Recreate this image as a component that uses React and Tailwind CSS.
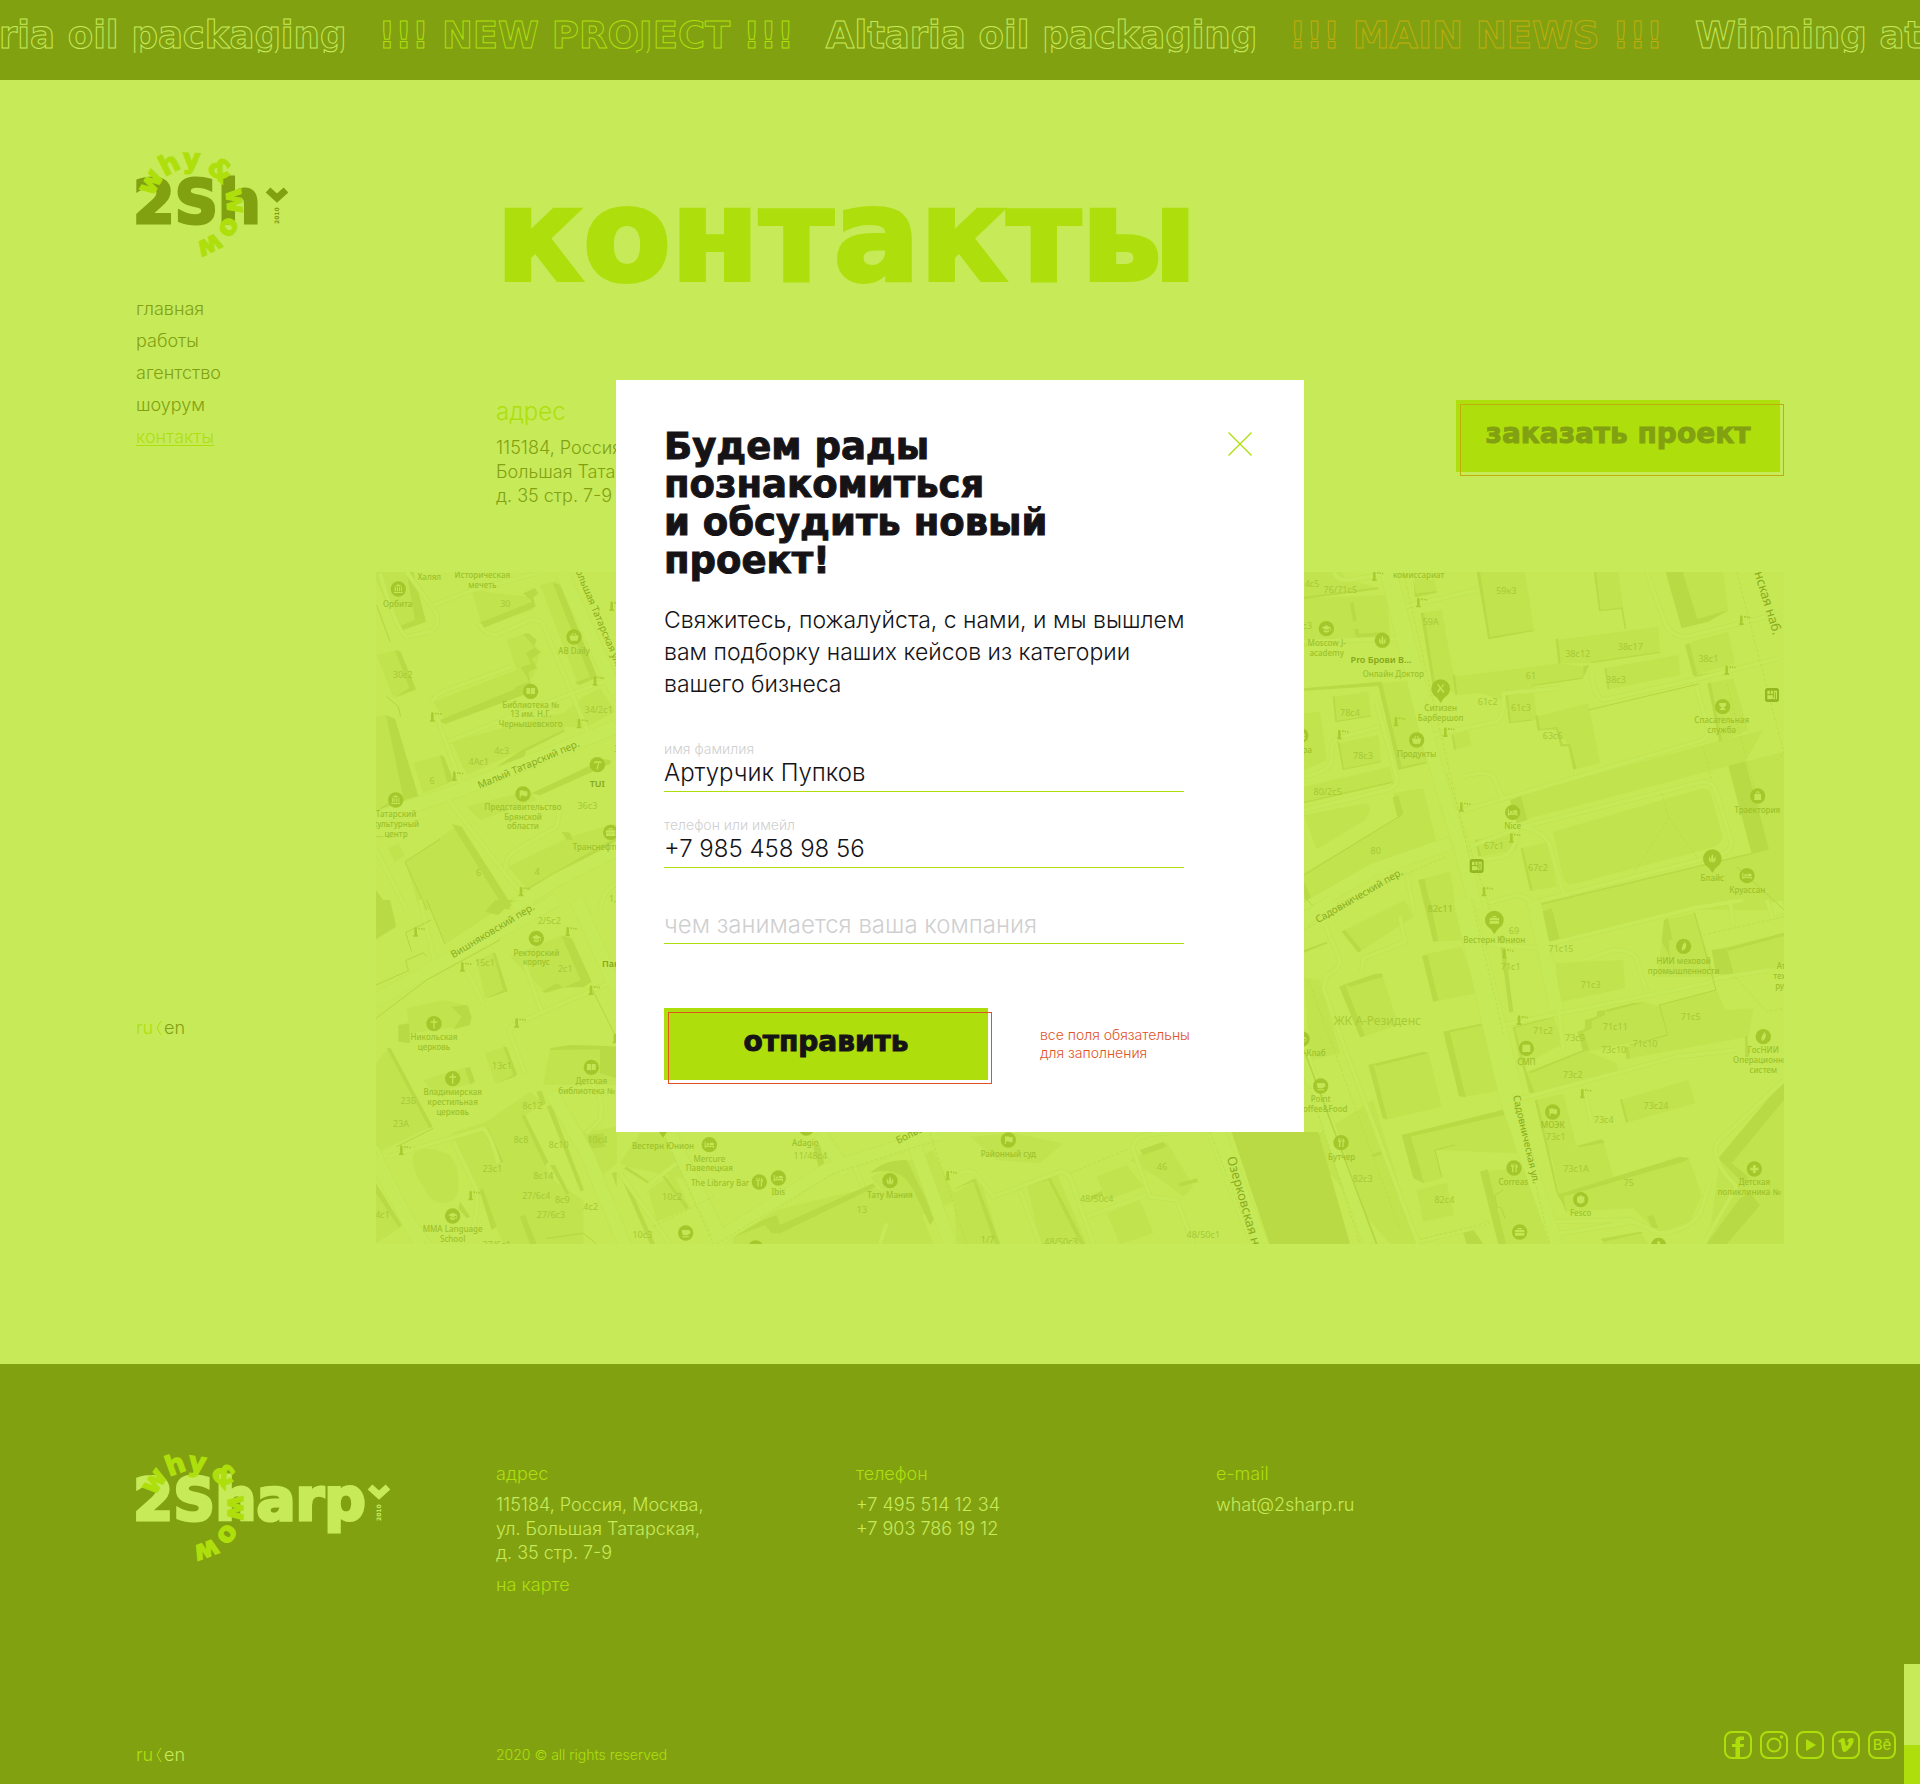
import React from "react";

const NAV = ["главная", "работы", "агентство", "шоурум", "контакты"];

const TICKER = [
  { text: "Altaria oil packaging", tone: "light" },
  { text: "!!! NEW PROJECT !!!", tone: "lime" },
  { text: "Altaria oil packaging", tone: "light" },
  { text: "!!! MAIN NEWS !!!", tone: "orange" },
  { text: "Winning at", tone: "light" },
];

const TICKER_TONE = {
  light: "[-webkit-text-stroke:1px_#c7ea59]",
  lime: "[-webkit-text-stroke:1px_#aedf0d]",
  orange: "[-webkit-text-stroke:1px_#bfae0c]",
};

function Ticker() {
  return (
    <div className="h-20 overflow-hidden bg-[#82a111] pt-[17px]">
      <div className="-ml-[85px] flex h-9 gap-8 overflow-hidden whitespace-nowrap font-['DejaVu_Sans',sans-serif] text-[37px] leading-[38px] font-bold text-transparent">
        {TICKER.map((item, i) => (
          <span key={i} className={TICKER_TONE[item.tone]}>
            {item.text}
          </span>
        ))}
      </div>
    </div>
  );
}

function OrbitWords({ cx, cy, letters }) {
  return (
    <g fill="#aedf0d" fontSize="27" fontWeight="700" textAnchor="middle" stroke="#aedf0d" strokeWidth="1.4">
      {letters.map(([ch, angle], i) => (
        <text key={i} x={cx} y={cy - 37} transform={`rotate(${angle} ${cx} ${cy})`}>
          {ch}
        </text>
      ))}
    </g>
  );
}

function LogoShort() {
  return (
    <svg width="156" height="108" viewBox="0 0 156 108" className="block overflow-visible font-['DejaVu_Sans',sans-serif]" aria-label="2Sharp">
      <text x="-3" y="71" fontSize="60" fontWeight="700" fill="#82a111" stroke="#82a111" strokeWidth="3">
        2Sh
      </text>
      <path d="M132 38 L141 46 L150 38" fill="none" stroke="#82a111" strokeWidth="7" />
      <text transform="translate(143 72) rotate(-90)" fontSize="6" fontWeight="700" fill="#82a111">
        2010
      </text>
      <OrbitWords
        cx={54}
        cy={53}
        letters={[["w", -60], ["h", -27], ["y", 2], ["&", 41], ["w", 85], ["o", 120], ["w", 154]]}
      />
    </svg>
  );
}

function LogoFull() {
  return (
    <svg width="258" height="108" viewBox="0 0 258 108" className="block overflow-visible font-['DejaVu_Sans',sans-serif]" aria-label="2Sharp">
      <text x="-3" y="66" fontSize="58" fontWeight="700" fill="#c7ea59" stroke="#c7ea59" strokeWidth="3">
        2Sharp
      </text>
      <path d="M234 33 L243 41 L252 33" fill="none" stroke="#c7ea59" strokeWidth="7" />
      <text transform="translate(245 67) rotate(-90)" fontSize="6" fontWeight="700" fill="#c7ea59">
        2010
      </text>
      <OrbitWords
        cx={55}
        cy={54}
        letters={[["w", -54], ["h", -20], ["y", 8], ["&", 46], ["w", 90], ["o", 126], ["w", 160]]}
      />
    </svg>
  );
}

function LangSwitch({ active }) {
  return (
    <div className="flex items-center text-lg leading-6 font-light">
      <a href="#ru" className="text-[#aedf0d]">
        ru
      </a>
      <svg width="9" height="16" viewBox="0 0 9 16" fill="none" stroke="#aedf0d" className="mx-px">
        <path d="M7 1 L3 8 L7 15" />
      </svg>
      <a href="#en" className={active}>
        en
      </a>
    </div>
  );
}

/* ---------- map ---------- */

/* Each sheet is drawn at three units per map pixel, from its own corner. */
const SHEETS = [
  {
    x: 370,
    y: 560,
    blocks: [
      "18,36 120,36 165,185 85,210 18,60",
      "305,90 470,110 490,150 335,198",
      "510,75 560,62 680,355 625,375",
      "20,285 85,270 135,390 70,412",
      "190,425 440,330 410,240 470,220 510,275 490,350 430,400 225,485",
      "130,610 215,585 245,665 160,700",
      "245,545 520,470 580,460 585,510 290,645",
      "105,905 200,840 265,795 425,1049 150,1049",
      "290,740 480,690 500,720 330,780",
      "415,920 600,830 740,790 740,830 470,985",
      "530,500 640,410 690,385 735,455 650,500",
      "18,470 50,465 140,710 18,750",
      "55,865 85,850 105,885 75,905",
    ],
    shades: [
      "110,36 130,36 168,185 90,213 78,203 135,180",
      "325,190 455,138 485,125 460,100 495,84 505,100 490,112 497,140 345,202",
      "548,68 572,75 682,352 628,376 615,368 660,350",
      "75,270 92,275 138,388 75,413 118,383",
      "460,222 475,220 500,240 490,262 513,275 485,298 502,325 475,335 485,385 470,350 452,322 483,312 468,280 495,262",
      "205,482 430,390 440,380 478,365 480,398 225,492",
      "48,466 75,476 145,708 120,715 18,752 60,725 100,712",
      "245,792 275,800 425,1035 415,1049 400,1040",
      "485,700 700,598 722,600 720,612 510,706",
      "470,985 740,830 740,842 490,993",
      "210,585 222,590 250,660 165,702 232,668",
      "575,815 600,818 608,840 590,838",
      "18,990 60,1049 18,1049",
      "18,135 22,135 62,245 58,245",
      "455,570 580,510 585,514 468,574 462,590 380,620",
    ],
    roads: [
      "M110,36 L200,160 Q210,200 180,215 L110,230 Q80,215 30,40",
      "M190,135 L310,90 L500,40",
      "M325,190 Q345,225 380,225 L480,180 Q510,175 520,195 L655,520",
      "M185,430 Q190,410 220,395 L425,320",
      "M200,470 L280,690",
      "M235,545 L500,440 L740,350",
      "M235,720 L420,960 L500,1049",
      "M410,930 Q400,900 430,875 L560,800 L570,740",
      "M690,1049 Q700,990 740,970",
      "M18,870 L110,1049",
    ],
    avenues: ["M18,775 L270,690 L740,500", "M575,36 L740,400", "M430,1040 L560,960 L740,870"],
    thin: ["M105,905 L210,838", "M105,905 L170,1049", "M50,410 L85,440 L92,470", "M18,830 L40,830"],
    numbers: [
      ["30", 406, 132], ["30с2", 98, 346], ["34/2с1", 686, 449], ["4с3", 395, 572], ["4Ас1", 326, 607],
      ["6", 186, 664], ["36с3", 652, 739], ["6", 326, 939], ["4", 501, 936], ["1,", 728, 1018], ["3", 740, 568],
    ],
    labels: [
      ["Халял", 178, 50], ["Историческая", 337, 46], ["мечеть", 337, 75], ["Орбита", 83, 131], ["AB Daily", 612, 273],
      ["Библиотека №", 482, 434], ["13 им. Н.Г.", 482, 463], ["Чернышевского", 482, 493], ["Татарский", 78, 762],
      ["культурный", 78, 792], ["центр", 78, 821], ["Представительство", 459, 740], ["Брянской", 459, 770],
      ["области", 459, 799], ["Транснефть", 678, 860],
    ],
    bold: [["TUI", 682, 673]],
    streets: [["Малый Татарский пер.", 476, 614, -23], ["Большая Татарская ул.", 682, 165, 67]],
    pins: [[85, 87, "museum"], [612, 231, "cart"], [482, 394, "book"], [682, 614, "palm"], [77, 720, "museum"], [459, 702, "flag"], [722, 817, "case"]],
    posts: [[187, 470], [675, 362], [627, 490], [253, 648], [453, 994], [725, 138]],
  },
  {
    x: 370,
    y: 900,
    blocks: [
      "18,0 60,0 78,80 18,100",
      "170,0 450,0 390,25 225,132",
      "110,325 225,300 300,320 300,375 120,400",
      "320,180 370,158 410,275 345,295",
      "420,170 580,105 655,250 525,275",
      "160,540 290,500 310,550 190,580",
      "345,460 405,440 440,530 375,550",
      "540,445 740,440 740,555 520,555",
      "18,490 55,445 185,680 18,760",
      "130,760 Q170,730 240,765 L260,800 Q275,880 250,900 Q190,930 160,860 Q120,800 130,760",
      "245,700 350,665 480,575 520,610 460,650 520,790 560,850 640,900 640,1032 400,1032 330,870",
      "620,700 740,680 740,790 680,840",
      "18,870 95,980 18,1030",
    ],
    shades: [
      "18,0 60,0 78,80 18,118",
      "375,0 430,0 385,45 345,35",
      "85,375 118,370 120,430 85,425",
      "245,320 290,315 305,350 300,375 250,388 275,350",
      "368,158 376,158 413,274 345,296 400,270",
      "575,108 605,115 665,245 640,262 582,262 632,240",
      "515,275 560,250 580,262 530,278",
      "50,445 62,445 188,680 178,685",
      "285,505 300,502 315,545 300,553",
      "400,440 410,440 442,525 378,552 430,525",
      "690,440 740,440 740,535 690,520",
      "540,445 600,435 690,437 740,440 740,448 540,450",
      "455,648 465,645 535,785 525,797",
      "500,575 515,572 528,610 515,618",
      "530,618 545,615 642,870 632,875",
      "340,690 355,685 400,785 385,792",
      "328,870 338,865 380,980 365,990",
      "540,795 555,795 598,880 590,885",
      "655,705 700,700 705,740 650,748",
      "270,905 300,950 290,955 265,925",
      "450,950 465,945 500,1032 480,1032",
      "18,850 95,975 88,983 18,880",
      "725,820 740,815 740,860",
    ],
    roads: [
      "M150,0 L195,190",
      "M290,210 L340,310",
      "M460,180 L515,335",
      "M465,520 L420,400 Q415,380 440,370 L740,240",
      "M55,770 L240,715 L340,685 Q360,700 385,790",
      "M250,725 L320,870 Q325,960 300,1000",
      "M660,540 Q705,600 690,660 L650,700",
      "M120,950 L180,1032",
      "M540,590 L640,760 L740,980",
      "M18,740 L160,1032",
    ],
    avenues: ["M18,300 L340,120 L560,0", "M620,0 L740,270", "M18,780 L150,1032", "M545,580 L650,760 L770,1049"],
    thin: ["M170,0 L225,132", "M18,255 L115,212 L107,182 L160,158 L170,170", "M390,120 L170,240 L18,355", "M668,270 L735,405", "M107,98 L183,60", "M107,98 L125,155", "M530,1015 L640,1000 L680,1032", "M80,740 L190,685"],
    numbers: [
      ["2/5с2", 538, 62], ["15с1", 345, 190], ["2с1", 586, 208], ["13с1", 396, 499], ["8с12", 487, 619], ["23Б", 115, 604],
      ["23А", 93, 673], ["8с8", 453, 720], ["8с10", 566, 736], ["10с4", 682, 720], ["23с1", 367, 808], ["8с14", 520, 827],
      ["27/6с4", 499, 887], ["8с9", 577, 899], ["4с2", 662, 922], ["27/6с3", 543, 945], ["14с1", 30, 945], ["27/6с1", 380, 1034],
    ],
    labels: [
      ["Ректорский", 499, 158], ["корпус", 499, 187], ["Никольская", 192, 412], ["церковь", 192, 441], ["Владимирская", 248, 577],
      ["крестильная", 248, 606], ["церковь", 248, 635], ["Детская", 664, 543], ["библиотека №", 650, 572], ["MMA Language", 248, 987], ["School", 248, 1016],
    ],
    bold: [["Панорама", 766, 192]],
    streets: [["Вишняковский пер.", 368, 93, -31]],
    pins: [[499, 115, "cap"], [192, 371, "cross"], [248, 536, "cross"], [664, 502, "book"], [248, 948, "cap"]],
    posts: [[137, 95], [277, 200], [593, 94], [663, 270], [440, 368], [94, 750], [302, 886], [735, 415]],
  },
  {
    x: 1290,
    y: 560,
    blocks: [
      "565,36 705,36 732,212 598,236",
      "42,36 155,36 165,55 265,85 42,110",
      "372,55 435,60 440,95 378,110",
      "915,36 985,36 1000,145 930,152",
      "1130,36 1300,36 1315,155 1175,205",
      "800,240 1105,200 1110,275 905,310 810,310",
      "945,325 1165,285 1170,345 955,388",
      "1190,250 1315,215 1335,310 1215,345",
      "490,350 805,310 880,320 880,352 725,375 650,390 560,400 500,405",
      "560,395 650,390 730,375 740,480 660,487 650,425",
      "740,470 895,430 930,610 855,628 835,555 800,510 745,510",
      "395,160 455,150 500,400 430,380",
      "130,410 235,395 243,470 140,485",
      "145,550 265,525 273,605 160,630",
      "42,460 90,455 110,600 42,630",
      "490,525 535,510 543,555 495,570",
      "42,680 300,620 310,665 42,725",
      "42,115 290,105 300,230 200,240 42,260",
      "270,370 390,360 410,610 330,625",
      "700,780 1365,605 1420,510 1260,550 690,705",
      "790,815 1240,685 Q1260,690 1265,710 L1298,830 Q1295,855 1260,865 L840,975 Q825,970 815,940 Z",
      "695,865 775,845 800,980 722,992",
      "558,840 690,805 680,870 570,890",
      "400,685 440,850 42,1049 42,940 335,765 310,700",
      "385,960 480,935 500,1049 405,1049",
      "1365,605 1482,575 1482,850 1435,868",
      "740,1035 1385,880 1482,850 1482,1049 740,1049",
      "42,765 230,730 Q250,745 225,780 L80,868",
      "1255,370 1330,355 1375,510 1290,545",
    ],
    shades: [
      "560,36 570,36 600,230 732,210 732,213 595,238",
      "42,110 265,82 265,88 42,117",
      "180,130 190,125 200,180 190,185",
      "192,208 205,206 208,222 285,215 285,224 200,238",
      "370,55 378,100 440,94 440,98 375,112",
      "912,36 918,36 932,150 998,142 1009,207 1004,207 994,147 927,154",
      "1127,36 1178,36 1222,178 1315,150 1255,185 1175,205",
      "797,238 804,236 812,310 805,312",
      "905,305 1110,275 1110,279 905,309",
      "944,325 949,323 958,386 953,390",
      "1185,255 1198,250 1222,343 1210,348",
      "1215,345 1335,330 1335,334 1215,350",
      "488,345 495,343 502,403 496,406",
      "645,390 652,388 662,485 725,478 725,482 657,489",
      "725,375 880,352 898,315 880,318 880,356 725,379",
      "736,468 743,465 750,507 803,500 818,552 840,552 860,625 850,630 835,558 812,560 797,506 743,512",
      "392,160 402,158 435,372 428,380",
      "128,410 133,408 141,482 243,466 243,469 136,487",
      "143,548 148,546 162,626 273,604 273,607 158,630",
      "42,385 275,365 335,620 410,605 410,610 325,630 265,378 42,392",
      "1252,370 1262,368 1296,540 1288,545",
      "660,720 693,708 712,780 680,790",
      "308,712 325,706 340,762 322,770",
      "692,865 698,863 728,990 720,992",
      "555,840 561,838 573,888 566,890",
      "1315,618 1366,603 1437,868 1385,882",
      "740,1033 1385,878 1385,883 740,1038",
      "42,965 80,1049 58,1049 42,1000",
      "385,960 403,956 425,1049 407,1049",
      "42,725 308,664 308,669 42,730",
      "485,525 490,523 498,568 492,570",
    ],
    roads: [
      "M130,36 Q145,65 180,60 L290,40",
      "M345,140 L560,90",
      "M1070,36 L1125,190 Q1145,230 1190,230 L1470,160",
      "M905,330 Q905,400 940,420 L1210,360 L1465,295",
      "M490,760 L1240,540 Q1260,530 1250,490 L1215,365",
      "M540,860 L700,800 L1240,665 Q1270,665 1280,700 L1325,850 Q1320,875 1290,885 L740,1025",
      "M430,525 L620,485 Q645,470 640,400 L805,385",
      "M515,650 Q590,630 610,650 L640,720",
      "M700,800 Q770,820 780,860 L820,1000",
      "M42,650 Q120,635 125,600 Q120,545 145,535 L270,500",
      "M42,750 L290,690 Q325,680 320,650 L260,430",
      "M580,900 L640,890 Q680,870 680,810",
      "M42,245 L340,235",
      "M590,1030 L680,1005 Q740,1020 740,1049",
      "M350,940 L370,1049",
    ],
    avenues: ["M290,36 L420,560 L510,860 L560,1049", "M300,36 L400,420", "M42,1049 L250,930 L480,850", "M1440,1049 L1482,1040"],
    thin: ["M895,450 L1225,372", "M42,945 L335,765", "M42,1010 L80,1049", "M1340,920 L1482,1049"],
    dashes: ["M1340,36 L1482,580 L1445,615", "M1115,700 L1137,775 L1025,950", "M1137,775 L1220,890", "M470,640 L600,1049", "M1310,370 L1410,750", "M340,36 L540,900", "M100,1049 L470,890", "M1240,560 L1265,660"],
    numbers: [
      ["4с5", 66, 71], ["76/71с5", 151, 89], ["59к3", 649, 94], ["59А", 422, 187], ["с3", 52, 199], ["38с12", 863, 283],
      ["38с17", 1021, 262], ["38с1", 1255, 297], ["38с3", 978, 359], ["61", 723, 348], ["61с2", 593, 427], ["61с3", 693, 445],
      ["78с4", 180, 458], ["63с6", 788, 527], ["78с3", 219, 588], ["80/2с5", 113, 696], ["80", 257, 874], ["67с1", 612, 858],
      ["67с2", 744, 925], ["82с11", 451, 1047],
    ],
    labels: [
      ["комиссариат", 386, 45], ["Moscow J-", 110, 249], ["academy", 110, 278], ["Онлайн Доктор", 310, 343], ["Ситизен", 452, 444],
      ["Барбершоп", 452, 474], ["Продукты", 380, 582], ["Спасательная", 1295, 481], ["служба", 1295, 510], ["Nice", 668, 797],
      ["Траектория", 1402, 750], ["Блайс", 1267, 954], ["Круассан", 1372, 990], ["ра", 52, 570],
    ],
    bold: [["Pro Брови B...", 273, 301]],
    streets: [["Садовнический пер.", 208, 1008, -30]],
    quays: [["нская наб.", 1430, 130, 73]],
    pins: [[109, 206, "cap"], [277, 241, "lotus"], [452, 386, "scissors"], [380, 540, "cart"], [1298, 440, "aid"], [668, 757, "bed"], [1403, 708, "bag"], [1267, 896, "lotus"], [1371, 947, "bed"], [32, 527, "case"]],
    drops: [[452, 386], [1267, 896]],
    buses: [[1446, 405], [560, 918]],
    posts: [[253, 48], [385, 127], [1354, 180], [1310, 330], [318, 484], [148, 523], [466, 516], [514, 740], [664, 833], [582, 994]],
  },
  {
    x: 1290,
    y: 900,
    blocks: [
      "155,95 345,0 370,50 210,155",
      "400,0 485,0 520,120 430,125",
      "398,165 515,140 560,280 430,305",
      "148,260 275,220 325,375 215,412",
      "235,495 415,455 455,620 285,660",
      "462,395 585,372 630,572 515,592",
      "755,30 1200,0 1200,35 805,125",
      "1125,60 1215,40 1275,230 1100,230",
      "790,190 1000,180 1005,265 815,305",
      "670,380 790,350 820,430 690,500",
      "880,385 930,340 1060,305 1110,320 1130,405 890,455",
      "1105,315 1280,270 1305,330 1390,325 1375,410 1020,475 1010,440 1135,400",
      "710,515 880,450 980,490 990,520 735,580",
      "990,600 1195,540 1215,610 1010,668",
      "735,600 820,582 860,740 780,770",
      "785,765 940,720 970,830 810,885",
      "820,885 1195,770 1235,885 1200,965 1105,1000 1030,925 830,935",
      "338,705 650,630 680,760 435,750 455,835 400,850",
      "380,870 470,848 492,945 400,965",
      "575,815 720,800 775,1032 640,1032",
      "1270,150 1482,100 1482,200 1330,225",
      "1290,770 1482,540 1482,1032 1255,1032",
      "935,1015 1050,995 1075,1032 940,1032",
      "42,235 90,240 150,460 60,480",
      "42,730 250,600 380,1032 300,1032",
    ],
    shades: [
      "155,95 165,90 215,150 205,158",
      "400,0 420,0 445,122 430,126",
      "396,168 412,164 445,300 430,305",
      "148,260 165,253 225,408 210,412",
      "165,253 255,222 275,220 280,230 180,260",
      "235,495 250,492 292,656 278,655",
      "250,492 400,455 415,460 260,498",
      "460,395 478,391 527,592 507,588",
      "478,391 570,372 582,375 480,397",
      "752,35 785,25 810,120 775,125",
      "1122,60 1134,55 1147,118 1135,122 1140,170 1115,125",
      "1265,150 1310,145 1332,225 1278,222",
      "1310,145 1482,98 1482,108 1315,152",
      "628,110 640,105 670,335 658,338",
      "862,395 885,388 885,360 920,350 922,333 945,330 945,345 905,362 905,385 880,398 898,450 880,455",
      "945,330 1030,308 1060,308 950,336",
      "668,382 790,350 790,353 674,384 710,515 735,580 718,578",
      "718,515 880,450 880,455 722,520",
      "990,598 996,597 1014,666 1008,668",
      "1005,442 1015,440 1020,475 1010,478",
      "734,600 742,600 806,880 820,885 830,940 815,905 800,880",
      "860,738 935,718 945,728 865,742",
      "808,882 970,832 1170,770 1197,775 1180,785 820,890",
      "335,705 360,702 402,850 370,835",
      "335,705 645,628 670,638 600,655 360,710",
      "570,815 593,808 648,1032 625,1032",
      "245,765 280,750 284,760 250,772",
      "1285,775 1482,540 1482,600 1325,790 1375,830 1360,850",
      "1250,1032 1350,895 1380,880 1410,915 1310,1032",
      "1365,408 1372,408 1378,470 1366,472",
      "932,1018 1050,995 1060,998 940,1025",
      "1072,950 1090,945 1105,985 1085,985",
      "517,990 550,990 580,1032 530,1032",
      "42,150 110,125 112,130 42,158",
    ],
    roads: [
      "M105,75 L150,180 Q150,210 110,225 L100,265 L170,460 L385,1032",
      "M330,50 L345,125 L220,175 L215,215",
      "M745,140 L1210,25 L1360,0",
      "M640,375 L1250,250 L1280,235 L1440,210",
      "M560,130 L750,145",
      "M880,180 L970,150 Q1030,150 1040,180 L1070,275",
      "M790,190 L820,450",
      "M660,605 L1160,470 L1340,450",
      "M885,580 L905,670",
      "M780,965 L1020,960 L1110,1000 Q1200,990 1230,940 L1260,845",
      "M1482,540 L1280,730 Q1260,780 1340,860 L1240,1032",
      "M390,1025 L600,970",
      "M780,1005 L1030,965",
      "M1320,0 L1330,80 M1430,0 L1450,60",
    ],
    avenues: ["M510,0 L650,600 L800,1032", "M530,0 L680,580", "M42,60 L130,0", "M42,470 L240,1032", "M730,0 L800,330"],
    water: ["0,696 42,750 157,1032 0,1032"],
    thin: ["M1213,38 L1278,270", "M1108,315 L1278,270", "M1108,315 L1133,405 L1020,435", "M435,750 L495,735 M435,750 L455,832", "M615,885 L640,870 M615,885 L620,920 L635,925 L645,955"],
    bars: ["M42,450 L260,1032"],
    dashes: ["M545,0 L640,400", "M42,90 L200,0", "M1335,230 L1430,335 L1482,325", "M1240,105 L1482,50", "M700,700 L780,1032", "M60,560 L210,1032", "M55,240 L330,990", "M390,1018 L600,970"],
    numbers: [
      ["82с11", 451, 28], ["69", 672, 92], ["71с15", 813, 148], ["71с1", 662, 201], ["71с3", 902, 256], ["71с5", 1202, 351],
      ["71с2", 759, 394], ["71с11", 976, 380], ["73с9", 855, 413], ["71с10", 1065, 433], ["73с10", 971, 451], ["73с2", 848, 525],
      ["73с24", 1098, 617], ["73с4", 941, 660], ["73с1", 797, 710], ["73с1А", 858, 807], ["75", 1016, 850], ["82с3", 218, 837], ["82с4", 463, 899],
    ],
    labels: [
      ["Вестерн Юнион", 613, 120], ["НИИ меховой", 1181, 183], ["промышленности", 1181, 212], ["Ате", 1480, 197], ["техн", 1476, 227],
      ["руч", 1476, 257], ["-Клаб", 74, 459], ["ГосНИИ", 1420, 451], ["Операционных", 1420, 481], ["систем", 1420, 510],
      ["СМП", 709, 486], ["Point", 92, 597], ["Coffee&Food", 98, 627], ["МОЭК", 788, 676], ["Бутчер", 155, 771], ["Correas", 670, 845],
      ["Fesco", 872, 938], ["Детская", 1393, 846], ["поликлиника №", 1377, 875],
    ],
    big: [["ЖК А-Резиденс", 262, 365]],
    streets: [["Садовническая ул.", 708, 718, 77]],
    pins: [[613, 60, "case"], [1181, 139, "leaf"], [709, 445, "coin"], [1420, 410, "leaf"], [92, 558, "cup"], [788, 636, "flag"], [153, 728, "fork"], [672, 804, "fork"], [872, 899, "box"], [1393, 807, "plus"], [689, 996, "case"], [1106, 1036, "plus"], [36, 417, "cap"]],
    drops: [[613, 60]],
    posts: [[643, 160], [687, 360], [877, 580]],
  },
  {
    x: 620,
    y: 1110,
    blocks: [
      "0,160 60,70 130,70 210,210 20,170",
      "85,240 160,190 210,295 110,335",
      "340,330 760,230 900,300 940,402 340,402",
      "750,200 870,150 940,120 1010,270 870,330",
      "1000,250 1080,205 1140,402 1010,402",
      "1220,220 1310,190 1400,402 1260,402",
      "1430,200 1520,165 1570,230 1460,270",
      "1460,310 1560,270 1600,370 1500,402",
      "1530,150 1640,95 1720,230 1690,260 1610,200",
      "1050,80 1180,70 1330,100 1260,160 1130,150",
    ],
    shades: [
      "10,175 20,170 88,215 82,220",
      "120,190 128,190 205,290 198,298",
      "0,195 10,190 105,402 90,402",
      "330,385 430,330 470,315 480,345 760,220 768,230 480,370 455,370 435,345",
      "750,190 Q790,150 860,150 L945,325 L930,345 L890,260 Q850,160 750,190",
      "998,240 1065,205 1140,402 1125,402 1060,215",
      "1210,230 1290,202 1395,402 1380,402 1285,210",
      "1560,120 1630,95 1640,110 1570,135",
      "1410,260 1445,242 1450,255 1415,270",
      "1675,220 1730,205 1735,215 1680,230",
      "580,110 600,105 615,170 598,178",
    ],
    roads: [
      "M0,190 L150,402",
      "M90,220 L170,160",
      "M1020,190 Q1060,170 1080,210 L1120,260 L1320,185 Q1350,185 1360,230 L1420,402",
      "M1200,240 L1260,402",
      "M1640,70 Q1530,70 1540,120 L1590,260 L1670,270 L1720,402",
      "M1400,320 L1580,255",
      "M700,160 L730,230",
      "M780,402 L800,340",
    ],
    avenues: ["M270,402 L620,180 L960,70", "M150,70 L310,402", "M870,70 L990,402", "M600,70 L680,190", "M1780,66 L1910,402", "M1795,66 L1925,402"],
    water: ["1835,66 2095,66 2190,402 1948,402"],
    dashes: ["M1350,190 L1530,115", "M290,402 L640,190 L950,90", "M130,70 L280,402", "M1770,66 L1900,402", "M100,350 L280,260", "M930,70 L1040,402"],
    numbers: [
      ["10с2", 156, 261], ["10с3", 67, 376], ["11/48с4", 571, 137], ["13", 726, 299], ["46", 1626, 170], ["48/50с4", 1430, 266],
      ["1/7", 1103, 390], ["48/50с3", 1323, 396], ["48/50с1", 1750, 376],
    ],
    labels: [
      ["Вестерн Юнион", 129, 108], ["Mercure", 268, 146], ["Павелецкая", 268, 175], ["The Library Bar", 300, 219], ["Ibis", 475, 246],
      ["Adagio", 556, 99], ["Тату Мания", 810, 254], ["Районный суд", 1165, 132],
    ],
    streets: [["Большой Татарский", 960, 30, -26]],
    quays: [["Озерковская наб.", 1875, 300, 74]],
    pins: [[129, 40, "case"], [268, 104, "bed"], [418, 216, "fork"], [475, 204, "bed"], [559, 54, "bed"], [810, 212, "lotus"], [1165, 90, "flag"], [197, 369, "cup"], [407, 414, "cup"]],
    drops: [[129, 40]],
    posts: [[983, 196]],
  },
];

/* Pictograms sit in a 30 × 30 box around the pin's centre. */
const PICTOS = {
  museum: "M-12,-8 L0,-14 L12,-8 Z M-11,-5 h4 v12 h-4 Z M-4,-5 h3 v12 h-3 Z M2,-5 h3 v12 h-3 Z M8,-5 h3 v12 h-3 Z M-13,9 h26 v3 h-26 Z",
  cart: "M-14,-4 h28 l-4,15 h-20 Z M-9,-4 l6,-9 l2,2 l-4,7 Z M9,-4 l-6,-9 l-2,2 l4,7 Z",
  book: "M-13,-10 h11 l1,2 v18 l-2,-2 h-10 Z M13,-10 h-11 l-1,2 v18 l2,-2 h10 Z",
  palm: "M-2,14 L2,-6 L-12,-4 Q-6,-14 2,-9 Q10,-14 14,-4 L5,-6 L2,14 Z",
  flag: "M-10,-11 h3 v23 h-3 Z M-7,-10 Q0,-14 4,-8 L13,-8 V5 Q4,9 0,4 L-7,5 Z",
  case: "M-14,-6 h28 v7 h-28 Z M-14,3 h28 v8 h-28 Z M-6,-7 v-5 h12 v5 h-3 v-2 h-6 v2 Z",
  cap: "M-14,-3 L0,-10 L14,-3 L0,4 Z M-8,3 L0,7 L8,3 V9 L0,12 L-8,9 Z M11,-2 h2 v10 h-2 Z",
  cross: "M-2,-15 h4 v8 h8 v4 h-8 v18 h-4 v-18 h-8 v-4 h8 Z",
  lotus: "M0,-14 Q7,0 0,13 Q-7,0 0,-14 M-9,-8 Q-3,4 -3,12 Q-13,8 -9,-8 M9,-8 Q3,4 3,12 Q13,8 9,-8",
  scissors: "M-11,-13 L-6,-13 L11,9 L7,13 L0,2 L-7,13 L-11,9 L-3,-2 Z M11,-13 L6,-13 L2,-6 L4,-2 Z",
  aid: "M-10,-11 h20 v8 l-7,5 l7,8 h-20 l7,-8 l-7,-5 Z",
  bed: "M-14,-9 h3 v12 h25 v7 h-3 v-3 h-22 v3 h-3 Z M-8,-4 h8 v5 h-8 Z M2,-6 h9 l3,3 v4 h-12 Z",
  bag: "M-10,-6 h20 v18 h-20 Z M-6,-7 q0,-7 6,-7 q6,0 6,7 h-3 q0,-4 -3,-4 q-3,0 -3,4 Z",
  leaf: "M4,-14 Q12,-2 2,10 L-4,13 Q-10,4 4,-14 Z",
  coin: "M-12,-11 h24 v22 h-24 Z",
  cup: "M-11,-9 h22 v3 h3 v8 h-4 q-2,5 -6,5 h-7 q-7,0 -8,-8 Z M-10,10 h20 v3 h-20 Z",
  fork: "M-9,-13 h2 v7 h2 v-7 h2 v7 h2 v-7 h2 v10 h-3 v16 h-4 v-16 h-3 Z M5,-13 q6,2 6,12 h-3 v14 h-4 Z",
  box: "M-11,-7 L0,-13 L11,-8 V7 L0,13 L-11,8 Z",
  plus: "M-4,-12 h8 v8 h8 v8 h-8 v8 h-8 v-8 h-8 v-8 h8 Z",
};

function toPath(points) {
  return points.includes("Q") || points.includes("L") ? `M${points}` : `M${points}Z`;
}

function SheetShapes({ sheet }) {
  return (
    <g transform={`translate(${sheet.x} ${sheet.y}) scale(${1 / 3})`}>
      <g fill="#c1e34e">{sheet.blocks.map((p, i) => <path key={i} d={toPath(p)} />)}</g>
      <g fill="#b8da44">{sheet.shades.map((p, i) => <path key={i} d={toPath(p)} />)}</g>
      {sheet.water && <g fill="#b9da45">{sheet.water.map((p, i) => <path key={i} d={toPath(p)} />)}</g>}
      <g fill="none" stroke="#bfe150" strokeWidth="15">{sheet.roads.map((d, i) => <path key={i} d={d} />)}</g>
      <g fill="none" stroke="#c0e251" strokeWidth="42">{sheet.avenues.map((d, i) => <path key={i} d={d} />)}</g>
      <g fill="none" stroke="#c6e957" strokeWidth="12">{sheet.roads.map((d, i) => <path key={i} d={d} />)}</g>
      <g fill="none" stroke="#c6e957" strokeWidth="39">{sheet.avenues.map((d, i) => <path key={i} d={d} />)}</g>
      <g fill="none" stroke="#b4d741" strokeWidth="3">{(sheet.thin || []).map((d, i) => <path key={i} d={d} />)}</g>
      <g fill="none" stroke="#b4d741" strokeWidth="5">{(sheet.bars || []).map((d, i) => <path key={i} d={d} />)}</g>
      <g fill="none" stroke="#b6d945" strokeWidth="2" strokeDasharray="9 6">
        {(sheet.dashes || []).map((d, i) => <path key={i} d={d} />)}
      </g>
      <g fill="#a9cd30">
        {sheet.posts.map(([x, y], i) => (
          <path key={i} d={`M${x - 4},${y - 10} q4,-8 8,0 v20 h3 v5 h-14 v-5 h3 Z M${x + 8},${y - 12} h5 v5 h-5 Z M${x + 16},${y - 11} h4 v5 h-4 Z M${x + 23},${y - 10} h4 v5 h-4 Z`} />
        ))}
      </g>
      {(sheet.drops || []).map(([x, y], i) => (
        <path key={i} d={`M${x - 28},${y} a28,28 0 1 1 56,0 q0,16 -18,28 l-10,15 l-10,-15 q-18,-12 -18,-28 Z`} fill="#a4c82c" />
      ))}
      {sheet.pins.map(([x, y, kind], i) => (
        <g key={i} transform={`translate(${x} ${y})`}>
          <circle r="23" fill="#a4c82c" />
          <path d={PICTOS[kind]} fill="#c3e654" />
        </g>
      ))}
      {(sheet.buses || []).map(([x, y], i) => (
        <g key={i} transform={`translate(${x} ${y})`}>
          <rect x="-21" y="-21" width="42" height="42" rx="8" fill="#93b71f" />
          <path d="M-14,-13 H15 V13 H5 q-4,-5 -7,0 H-14 Z" fill="#c3e654" />
          <path d="M-14,-1 H4 M-5,-13 V-1 M4,-13 V8 M10,-8 V13" fill="none" stroke="#93b71f" strokeWidth="3" />
        </g>
      ))}
    </g>
  );
}

function SheetText({ sheet, list, ...style }) {
  return (
    <g textAnchor="middle" {...style}>
      {(list || []).map(([text, x, y, turn = 0], i) => (
        <text key={i} transform={`translate(${sheet.x + x / 3} ${sheet.y + y / 3}) rotate(${turn})`} y="3">
          {text}
        </text>
      ))}
    </g>
  );
}

function CityMap() {
  return (
    <svg viewBox="376 572 1408 672" className="block w-full bg-[#c5e854] font-['Noto_Sans',sans-serif]" role="img" aria-label="Карта">
      {SHEETS.map((s, i) => <SheetShapes key={i} sheet={s} />)}
      {SHEETS.map((s, i) => (
        <g key={i}>
          <SheetText sheet={s} list={s.numbers} fontSize="9" fill="#a7ca35" />
          <SheetText sheet={s} list={s.labels} fontSize="8" fontWeight="500" fill="#9ec22a" />
          <SheetText sheet={s} list={s.big} fontSize="12" fill="#a9cc36" />
          <SheetText sheet={s} list={s.bold} fontSize="9" fontWeight="600" fill="#86a81a" />
          <SheetText sheet={s} list={s.streets} fontSize="10" fill="#8aad1d" />
          <SheetText sheet={s} list={s.quays} fontSize="13" fill="#8aad1d" />
        </g>
      ))}
    </svg>
  );
}

/* ---------- controls ---------- */

function OffsetButton({ children, tone, outline, type = "button" }) {
  return (
    <button
      type={type}
      className={`relative h-[72px] w-[324px] shrink-0 bg-[#aedf0d] pb-1 font-['DejaVu_Sans',sans-serif] text-[28px] leading-8 font-bold whitespace-nowrap ${tone}`}
    >
      {children}
      <span className={`pointer-events-none absolute -right-1 -bottom-1 h-[72px] w-[324px] border ${outline}`} />
    </button>
  );
}

function Field({ id, label, value }) {
  return (
    <div className="flex h-[76px] flex-col justify-end border-b border-[#aedf0d] pb-[2px]">
      <label htmlFor={id} className={value ? "text-sm leading-4 font-light text-[#cfcfcf]" : "sr-only"}>
        {label}
      </label>
      <input
        id={id}
        defaultValue={value}
        placeholder={label}
        className="w-full bg-transparent text-2xl leading-8 font-light text-[#161316] outline-none placeholder:text-[#cfcfcf]"
      />
    </div>
  );
}

function ContactDialog() {
  return (
    <div className="absolute inset-x-0 top-[380px] flex justify-center">
      <section role="dialog" aria-labelledby="dialog-title" className="w-[688px] bg-white px-12 pt-12 pb-[52px] text-[#161316]">
        <div className="flex items-start justify-between">
          <h2 id="dialog-title" className="font-['DejaVu_Sans',sans-serif] text-[37px] leading-[38px] font-bold [-webkit-text-stroke:1px_#161316]">
            Будем рады
            <br />
            познакомиться
            <br />и обсудить новый
            <br />
            проект!
          </h2>
          <button type="button" aria-label="Закрыть" className="mt-1 mr-1">
            <svg width="24" height="24" viewBox="0 0 24 24" stroke="#aedf0d" strokeWidth="1.3">
              <path d="M0.500 0.500 L23.500 23.500 M23.500 0.500 L0.500 23.500" />
            </svg>
          </button>
        </div>
        <p className="mt-6 text-[23px] leading-8 font-light">
          Свяжитесь, пожалуйста, с нами, и мы вышлем
          <br />
          вам подборку наших кейсов из категории
          <br />
          вашего бизнеса
        </p>
        <form>
          <div className="mt-4 w-[520px]">
            <Field id="name" label="имя фамилия" value="Артурчик Пупков" />
            <Field id="contact" label="телефон или имейл" value="+7 985 458 98 56" />
            <Field id="company" label="чем занимается ваша компания" />
          </div>
          <div className="mt-16 flex items-center gap-[52px]">
            <OffsetButton type="submit" tone="text-[#161316] [-webkit-text-stroke:1px_#161316]" outline="border-[#e0531f]">
              отправить
            </OffsetButton>
            <p className="text-sm leading-[18px] font-light whitespace-nowrap text-[#e0531f]">
              все поля обязательны
              <br />
              для заполнения
            </p>
          </div>
        </form>
      </section>
    </div>
  );
}

/* ---------- footer ---------- */

const SOCIAL = [
  ["Facebook", <path key="f" d="M11.500 26 V16 H8 V13 H11.500 V10.500 C11.500 7 13.500 5.500 17 5.500 H20 V9 H18 C16.500 9 16 9.500 16 11 V13 H20 L19.500 16 H16 V26 Z" fill="#aedf0d" />],
  ["Instagram", <g key="i"><circle cx="14" cy="14" r="6.500" fill="none" stroke="#aedf0d" strokeWidth="2" /><circle cx="21.500" cy="6" r="1.700" fill="#aedf0d" /></g>],
  ["YouTube", <path key="y" d="M10 8 L20 14 L10 20 Z" fill="#aedf0d" />],
  ["Vimeo", <path key="v" d="M6 10 L10 7.200 C12 6.500 12.700 8 13 10 C13.400 12.500 13.800 15 14.500 15 C15.200 15 16.800 12.500 16.800 11.500 C16.800 10.500 16 10.500 15 10.800 C15.700 8 17.500 6.700 19.800 7 C22 7.300 22 9.500 21 12 C19.500 15.500 15 21 12.500 21 C10.500 21 10.200 18.500 9.600 16 C9 13.500 8.800 11 8.200 11 L6.800 11.500 Z" fill="#aedf0d" />],
  ["Behance", <text key="b" x="14" y="19" textAnchor="middle" fontSize="15" fontWeight="500" fill="#aedf0d">Bē</text>],
];

function FooterColumn({ title, lines, children }) {
  return (
    <div className="text-lg leading-6 font-light text-[#c7ea59]">
      <h3 className="mb-[7px] text-[#aedf0d]">{title}</h3>
      {lines.map((line) => (
        <p key={line}>{line}</p>
      ))}
      {children}
    </div>
  );
}

function Footer() {
  return (
    <footer className="relative flex min-h-[420px] flex-col justify-between bg-[#82a111] pt-[90px] pb-[17px]">
      <div className="flex px-[136px]">
        <a href="#home" className="w-[360px] shrink-0">
          <LogoFull />
        </a>
        <div className="grid flex-1 grid-cols-[360px_360px_1fr] pt-2">
          <FooterColumn title="адрес" lines={["115184, Россия, Москва,", "ул. Большая Татарская,", "д. 35 стр. 7-9"]}>
            <a href="#map" className="mt-2 block text-[#aedf0d]">
              на карте
            </a>
          </FooterColumn>
          <FooterColumn title="телефон" lines={["+7 495 514 12 34", "+7 903 786 19 12"]} />
          <FooterColumn title="e-mail" lines={[]}>
            <a href="mailto:what@2sharp.ru">what@2sharp.ru</a>
          </FooterColumn>
        </div>
      </div>
      <div className="flex items-start pr-6 pl-[136px]">
        <div className="w-[360px] shrink-0 pt-3">
          <LangSwitch active="text-[#c7ea59]" />
        </div>
        <p className="pt-3 text-sm leading-6 font-light text-[#aedf0d]">2020 © all rights reserved</p>
        <div className="ml-auto flex gap-2">
          {SOCIAL.map(([name, icon]) => (
            <a key={name} href={`#${name.toLowerCase()}`} aria-label={name}>
              <svg width="28" height="28" viewBox="0 0 28 28" className="block">
                <rect x="1" y="1" width="26" height="26" rx="7" fill="none" stroke="#aedf0d" strokeWidth="2" />
                {icon}
              </svg>
            </a>
          ))}
        </div>
      </div>
      <div className="absolute right-0 bottom-0 flex w-4 flex-col">
        <div className="h-[81px] bg-[#c7ea59]" />
        <div className="h-[39px] bg-[#aedf0d]" />
      </div>
    </footer>
  );
}

export default function App() {
  return (
    <div className="relative bg-[#c7ea59] font-['Inter',sans-serif]">
      <Ticker />
      <div className="flex px-[136px] pt-[72px] pb-[120px]">
        <aside className="w-60 shrink-0">
          <a href="#home" className="block">
            <LogoShort />
          </a>
          <nav className="mt-[33px] flex flex-col items-start text-lg leading-8 font-light text-[#82a111]">
            {NAV.map((item) => (
              <a
                key={item}
                href={`#${item}`}
                className={item === "контакты" ? "text-[#aedf0d] underline decoration-1 underline-offset-2" : ""}
              >
                {item}
              </a>
            ))}
          </nav>
          <div className="mt-[563px]">
            <LangSwitch active="text-[#82a111]" />
          </div>
        </aside>
        <main className="min-w-0 flex-1">
          <div className="pl-[120px]">
            <h1 className="pt-[14px] font-['DejaVu_Sans',sans-serif] text-[128px] leading-[140px] font-bold text-[#aedf0d] [-webkit-text-stroke:4px_#aedf0d]">
              контакты
            </h1>
            <div className="mt-[94px] flex items-start justify-between pr-1">
              <div className="text-lg leading-6 font-light text-[#82a111]">
                <h2 className="mb-3 text-2xl leading-6 text-[#aedf0d]">адрес</h2>
                <p>115184, Россия,</p>
                <p>Большая Татарская,</p>
                <p>д. 35 стр. 7-9</p>
              </div>
              <OffsetButton tone="text-[#82a111] [-webkit-text-stroke:1px_#82a111]" outline="border-[#bfae0c]">
                заказать проект
              </OffsetButton>
            </div>
          </div>
          <div className="mt-16">
            <CityMap />
          </div>
        </main>
      </div>
      <Footer />
      <ContactDialog />
    </div>
  );
}
